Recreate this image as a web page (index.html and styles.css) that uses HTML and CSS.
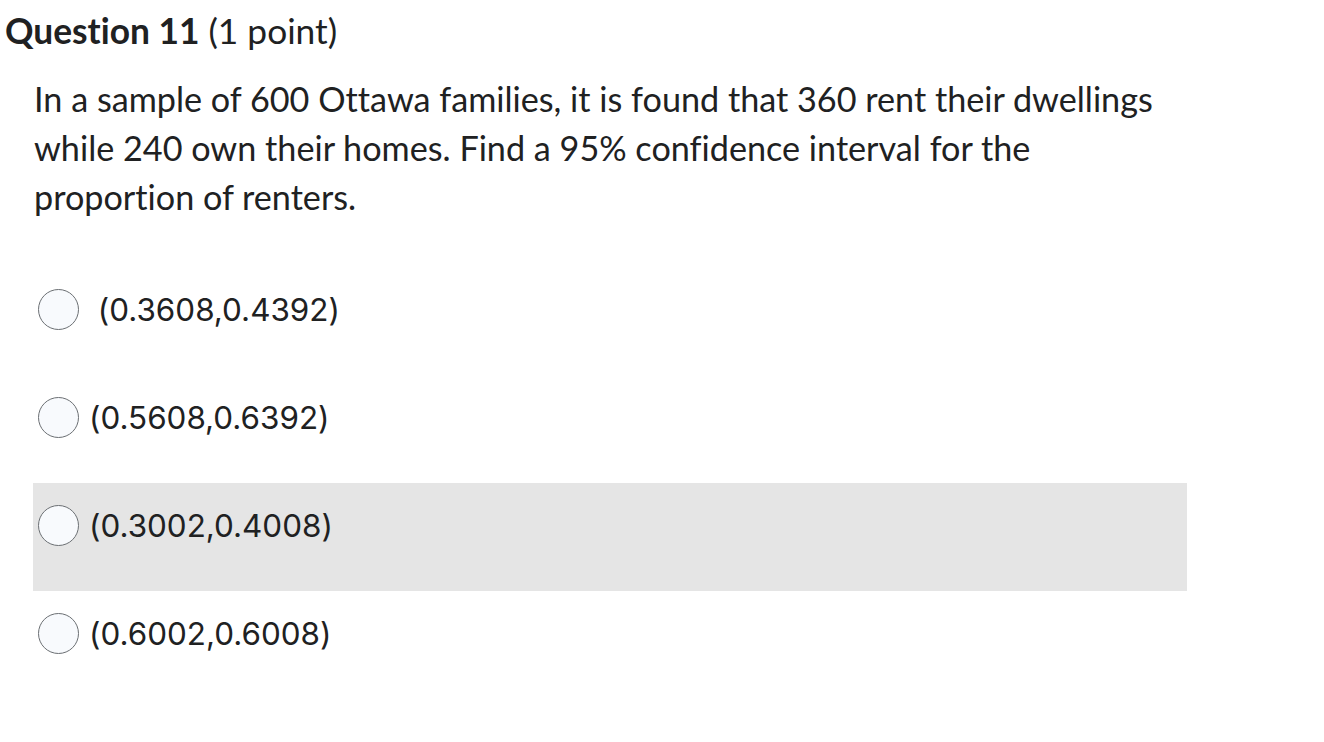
FILE: index.html
```html
<!DOCTYPE html>
<html lang="en">
<head>
<meta charset="utf-8">
<title>Question 11</title>
<link rel="stylesheet" href="styles.css">
</head>
<body>
<div class="question">
  <h2 class="q-header"><span class="q-title">Question 11</span> <span class="q-points">(1 point)</span></h2>
  <p class="q-text">In a sample of 600 Ottawa families, it is found that 360 rent their dwellings while 240 own their homes. Find a 95% confidence interval for the proportion of renters.</p>
  <div class="options">
    <label class="option"><span class="radio"></span><span class="opt-text">&nbsp;(0.3608,0.4392)</span></label>
    <label class="option"><span class="radio"></span><span class="opt-text">(0.5608,0.6392)</span></label>
    <label class="option hover"><span class="radio"></span><span class="opt-text">(0.3002,0.4008)</span></label>
    <label class="option"><span class="radio"></span><span class="opt-text">(0.6002,0.6008)</span></label>
  </div>
</div>
</body>
</html>
```

FILE: styles.css
```css
html, body {
  margin: 0;
  padding: 0;
  background: #ffffff;
}
body {
  font-family: "Lato", "Liberation Sans", sans-serif;
  color: #202122;
  font-variant-ligatures: none;
}
.question {
  width: 1187px;
}
.q-header {
  margin: 0;
  padding: 11px 0 0 5px;
  font-size: 35.3px;
  line-height: 40px;
  font-weight: 400;
}
.q-title {
  font-weight: 700;
}
.q-text {
  margin: 0;
  padding: 23px 0 0 34px;
  width: 1135px;
  font-size: 34.2px;
  line-height: 49px;
}
.options {
  margin: 46px 0 0 33px;
  display: flex;
  flex-direction: column;
}
.option {
  height: 108px;
  box-sizing: border-box;
  padding: 22px 0 0 5px;
  display: flex;
  align-items: flex-start;
  gap: 10px;
}
.option.hover {
  background: #e5e5e5;
}
.radio {
  width: 39px;
  height: 39px;
  border: 1px solid #6b6f73;
  border-radius: 50%;
  background: #f8fafd;
  flex: none;
}
.opt-text {
  font-family: "Inter", "Lato", sans-serif;
  font-size: 31.4px;
  line-height: 42px;
}
```
